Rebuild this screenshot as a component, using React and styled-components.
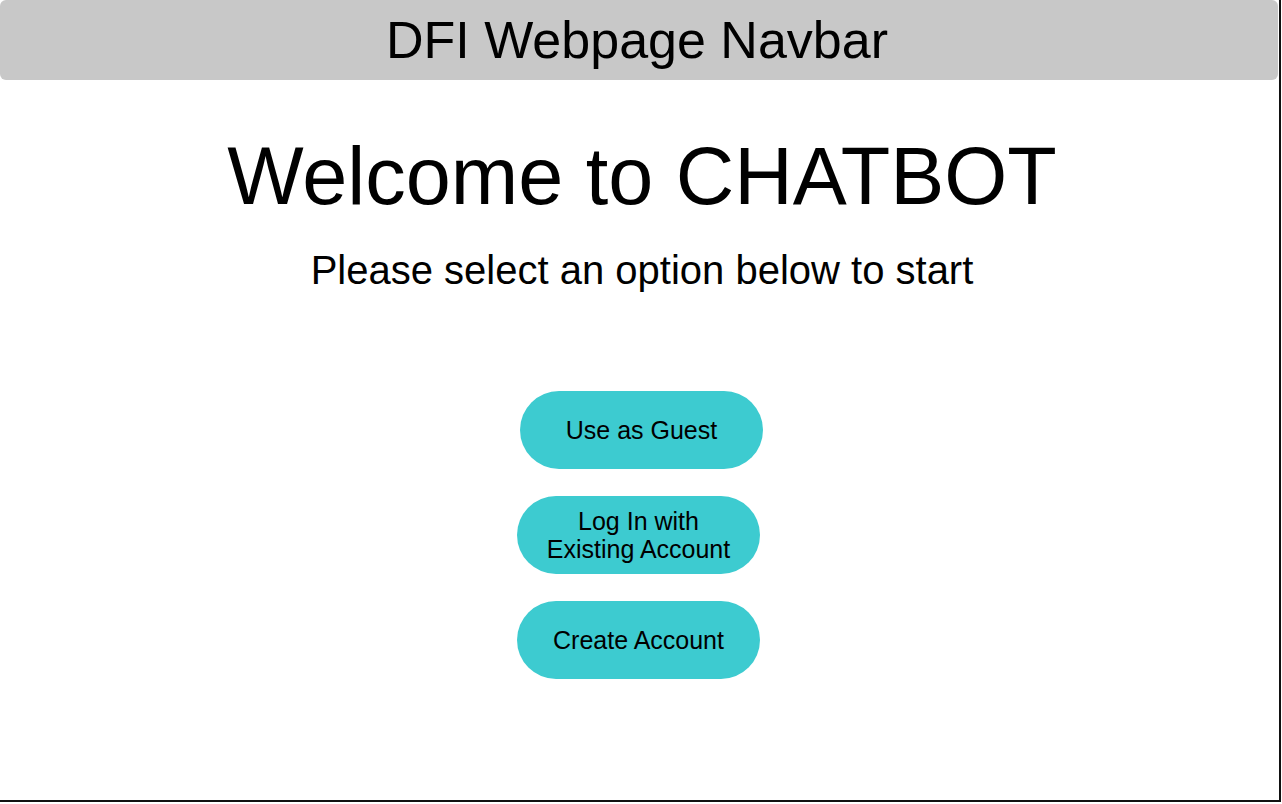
import React from 'react';
import styled, { createGlobalStyle } from 'styled-components';

const GlobalStyle = createGlobalStyle`
  * {
    box-sizing: border-box;
  }

  body {
    margin: 0;
    background: #ffffff;
    font-family: "Liberation Sans", Arial, sans-serif;
    color: #000000;
  }
`;

const options = [
  { label: 'Use as Guest', nudge: true },
  { label: ['Log In with', 'Existing Account'] },
  { label: 'Create Account' }
];

function App() {
  return (
    <>
      <GlobalStyle />
      <Frame>
        <Navbar>DFI Webpage Navbar</Navbar>
        <Main>
          <Title>Welcome to CHATBOT</Title>
          <Subtitle>Please select an option below to start</Subtitle>
          <OptionList>
            {options.map((opt, i) => (
              <OptionButton key={i} type="button" $nudge={opt.nudge}>
                {Array.isArray(opt.label)
                  ? opt.label.map((line) => <Line key={line}>{line}</Line>)
                  : opt.label}
              </OptionButton>
            ))}
          </OptionList>
        </Main>
      </Frame>
    </>
  );
}

export default App;

// Styled Components
const Frame = styled.div`
  width: 1281px;
  height: 802px;
  border-right: 2px solid #111111;
  border-bottom: 2px solid #111111;
  display: flex;
  flex-direction: column;
`;

const Navbar = styled.header`
  width: 1278px;
  height: 80px;
  flex-shrink: 0;
  background: #c8c8c8;
  border-radius: 6px;
  display: flex;
  align-items: center;
  justify-content: center;
  padding-right: 4px;
  font-size: 52px;
`;

const Main = styled.main`
  display: flex;
  flex-direction: column;
  align-items: center;
  padding-top: 56px;
  padding-left: 5px;
`;

const Title = styled.h1`
  margin: 0;
  font-size: 81px;
  font-weight: normal;
  line-height: 1;
`;

const Subtitle = styled.p`
  margin: 33px 0 0;
  font-size: 40px;
  line-height: 1;
`;

const OptionList = styled.div`
  display: flex;
  flex-direction: column;
  align-items: center;
  gap: 27px;
  margin-top: 101px;
  margin-left: -7px;
`;

const OptionButton = styled.button`
  width: 243px;
  height: 78px;
  border: none;
  border-radius: 39px;
  background: #3dcbd0;
  color: #000000;
  font-family: "Liberation Sans", Arial, sans-serif;
  font-size: 25px;
  line-height: 28px;
  display: flex;
  flex-direction: column;
  align-items: center;
  justify-content: center;
  padding: 0;
  cursor: pointer;
  margin-left: ${(p) => (p.$nudge ? '6px' : '0')};
`;

const Line = styled.span`
  display: block;
`;
